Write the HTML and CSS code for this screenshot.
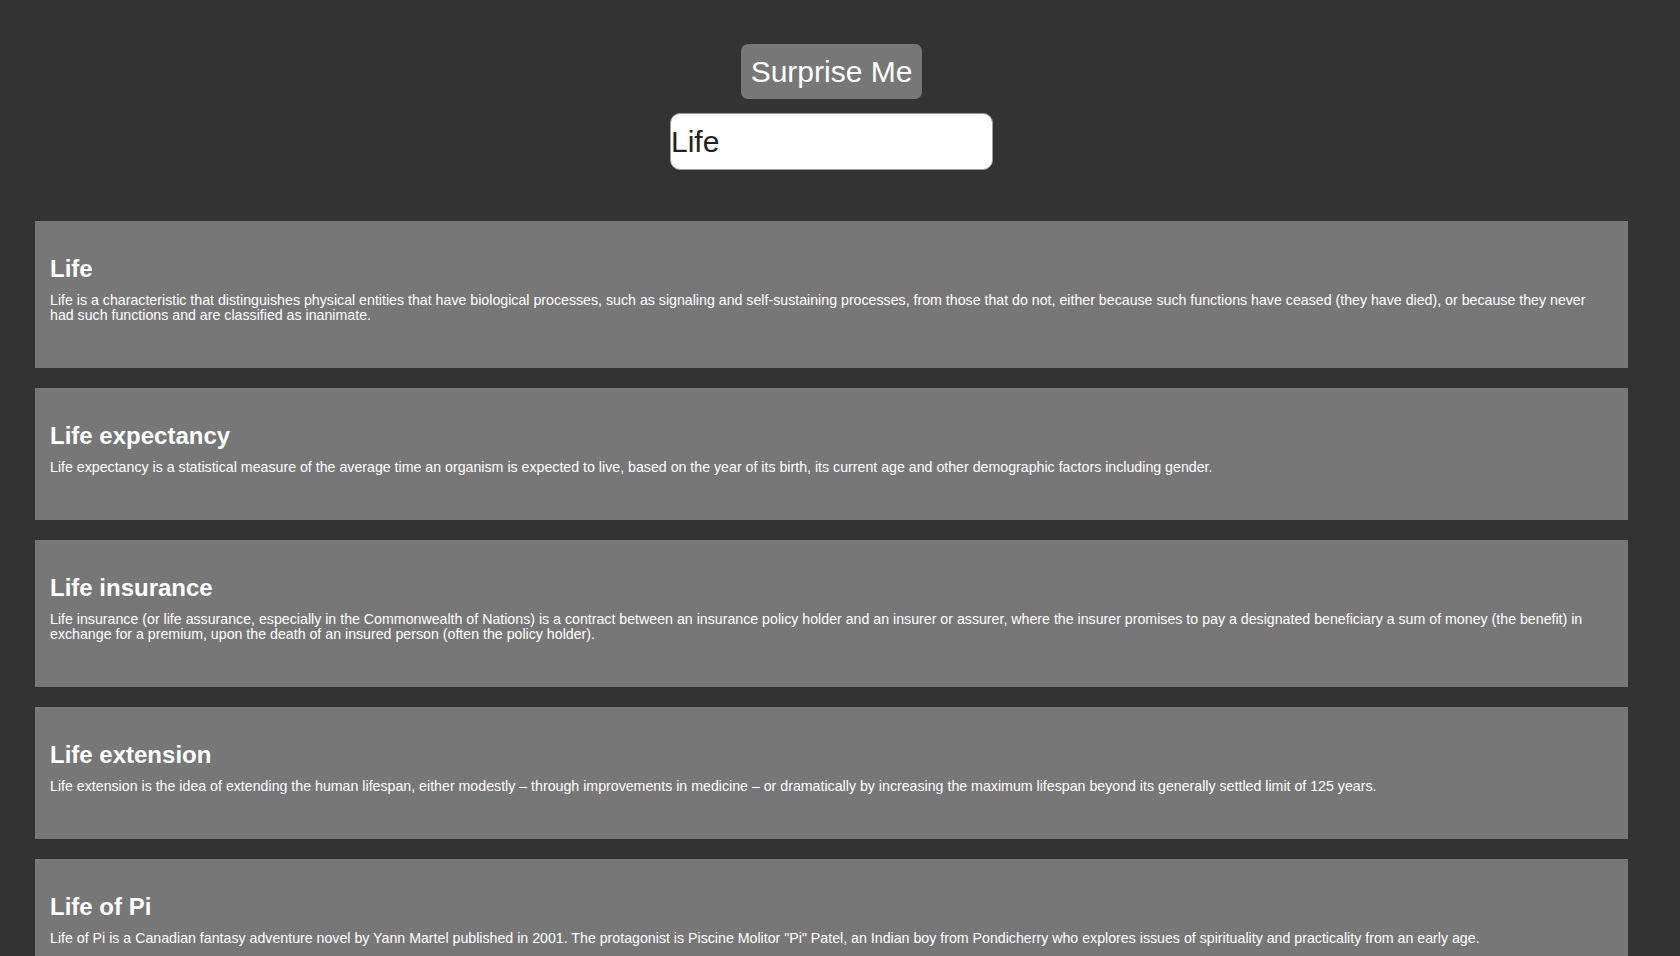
FILE: index.html
```html
<!DOCTYPE html>
<html lang="en">
<head>
<meta charset="utf-8">
<title>Wiki Search</title>
<link rel="stylesheet" href="styles.css">
</head>
<body>
<div class="page">
  <header class="search-header">
    <button class="surprise-btn" type="button">Surprise Me</button>
    <input class="search-input" type="text" value="Life">
  </header>
  <main class="results">
    <article class="result-card">
      <h2 class="result-title">Life</h2>
      <p class="result-text">Life is a characteristic that distinguishes physical entities that have biological processes, such as signaling and self-sustaining processes, from those that do not, either because such functions have ceased (they have died), or because they never had such functions and are classified as inanimate.</p>
    </article>
    <article class="result-card">
      <h2 class="result-title">Life expectancy</h2>
      <p class="result-text">Life expectancy is a statistical measure of the average time an organism is expected to live, based on the year of its birth, its current age and other demographic factors including gender.</p>
    </article>
    <article class="result-card">
      <h2 class="result-title">Life insurance</h2>
      <p class="result-text">Life insurance (or life assurance, especially in the Commonwealth of Nations) is a contract between an insurance policy holder and an insurer or assurer, where the insurer promises to pay a designated beneficiary a sum of money (the benefit) in exchange for a premium, upon the death of an insured person (often the policy holder).</p>
    </article>
    <article class="result-card">
      <h2 class="result-title">Life extension</h2>
      <p class="result-text">Life extension is the idea of extending the human lifespan, either modestly – through improvements in medicine – or dramatically by increasing the maximum lifespan beyond its generally settled limit of 125 years.</p>
    </article>
    <article class="result-card">
      <h2 class="result-title">Life of Pi</h2>
      <p class="result-text">Life of Pi is a Canadian fantasy adventure novel by Yann Martel published in 2001. The protagonist is Piscine Molitor "Pi" Patel, an Indian boy from Pondicherry who explores issues of spirituality and practicality from an early age.</p>
    </article>
  </main>
</div>
</body>
</html>
```

FILE: styles.css
```css
html, body {
  margin: 0;
  padding: 0;
  background: #333333;
}

body {
  font-family: "Liberation Sans", Arial, sans-serif;
  color: #ffffff;
}

.page {
  padding: 0 52px 0 35px;
}

.search-header {
  display: flex;
  flex-direction: column;
  align-items: center;
  gap: 14px;
  padding-top: 44px;
  padding-bottom: 51px;
}

.surprise-btn {
  font-family: "Liberation Sans", Arial, sans-serif;
  font-size: 30px;
  line-height: 35px;
  color: #ffffff;
  background: #777777;
  border: none;
  border-radius: 7px;
  padding: 10px 10px;
  margin: 0;
  cursor: pointer;
}

.search-input {
  box-sizing: border-box;
  width: 323px;
  height: 57px;
  margin: 0;
  padding: 0;
  border: 1px solid #a0a0a0;
  border-radius: 10px;
  background: #ffffff;
  color: #222222;
  font-family: "Liberation Sans", Arial, sans-serif;
  font-size: 30px;
  outline: none;
}

.results {
  display: flex;
  flex-direction: column;
  gap: 20px;
}

.result-card {
  background: #777777;
  padding: 34px 15px 45px;
}

.result-title {
  margin: 0 0 10px;
  font-size: 24px;
  font-weight: bold;
  line-height: normal;
}

.result-text {
  margin: 0;
  font-size: 14.2px;
  line-height: 15px;
}
```
